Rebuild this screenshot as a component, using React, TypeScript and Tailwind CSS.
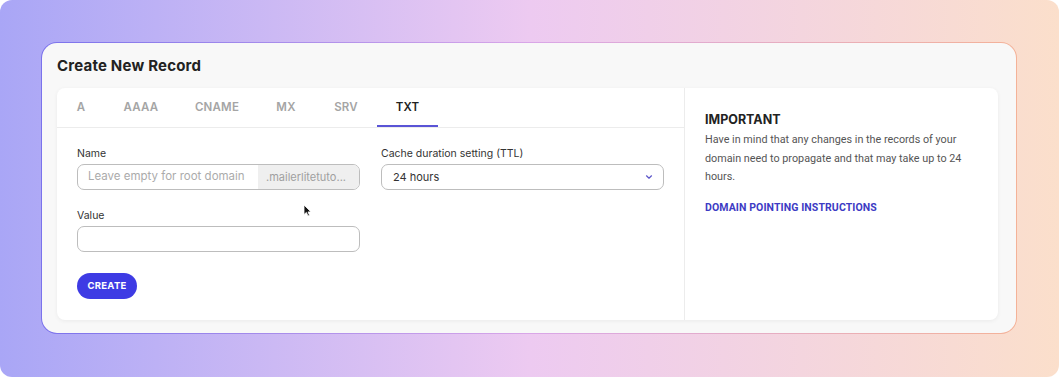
import React from "react";

const tabs = [
  { label: "A", w: "w-[48px]" },
  { label: "AAAA", w: "w-[72px]" },
  { label: "CNAME", w: "w-[80px]" },
  { label: "MX", w: "w-[58px]" },
  { label: "SRV", w: "w-[62px]" },
  { label: "TXT", w: "w-[61px]", active: true },
];

const poppins = { fontFamily: "Inter, 'Open Sans', sans-serif" };

export default function App() {
  return (
    <div className="w-[1059px] h-[377px] bg-white">
      <div className="relative w-full h-full rounded-[12px] bg-gradient-to-r from-[#a9a6f6] via-[#edcaf1] to-[#fbdfcb] pl-[41px] pt-[42px]">
        <div className="w-[976px] h-[292px] rounded-[16px] p-px bg-gradient-to-r from-[#7b72ec] via-[#d9a6e8] to-[#f4b298]">
          <div className="w-full h-full rounded-[15px] bg-[#f8f8f8] pl-[15px] pr-[18px] pt-[13px]">
            <h1
              className="text-[15px] leading-[20px] font-bold text-[#222] tracking-[0.2px]"
              style={{ fontFamily: "Inter, sans-serif" }}
            >
              Create New Record
            </h1>
            <div className="mt-[12px] flex h-[232px] rounded-[8px] bg-white shadow-[0_1px_4px_rgba(0,0,0,0.06)]">
              {/* Left pane */}
              <div className="w-[627px] flex flex-col">
                <div className="flex h-[40px] border-b border-[#ececec]">
                  {tabs.map((t) => (
                    <div
                      key={t.label}
                      className={`${t.w} h-full flex items-center justify-center text-[11.5px] font-semibold tracking-[0.2px] ${
                        t.active
                          ? "text-[#222] border-b-2 border-[#5a54d6]"
                          : "text-[#a5a5a5]"
                      }`}
                      style={poppins}
                    >
                      <span className={t.active ? "mt-[2px]" : ""}>{t.label}</span>
                    </div>
                  ))}
                </div>
                <div className="relative px-5 pt-[19px]">
                  <div className="grid grid-cols-2 gap-x-[21px]">
                    <div>
                      <div className="text-[10.5px] leading-[14px] text-[#333] mb-[3px]" style={poppins}>
                        Name
                      </div>
                      <div className="flex h-[26px] rounded-[7px] border border-[#bdbdbd] overflow-hidden">
                        <div className="flex-1 flex items-center pl-[10px] text-[11.5px] text-[#ababab]" style={poppins}>
                          Leave empty for root domain
                        </div>
                        <div className="w-[101px] bg-[#efefef] flex items-center pl-[8px] text-[11px] text-[#a0a0a0]" style={poppins}>
                          .mailerlitetuto...
                        </div>
                      </div>
                    </div>
                    <div>
                      <div className="text-[10.5px] leading-[14px] text-[#333] mb-[3px]" style={poppins}>
                        Cache duration setting (TTL)
                      </div>
                      <div className="flex items-center justify-between h-[26px] rounded-[7px] border border-[#bdbdbd] pl-[11px] pr-[9px]">
                        <span className="text-[11px] text-[#333]" style={poppins}>
                          24 hours
                        </span>
                        <svg width="10" height="10" viewBox="0 0 10 10" fill="none">
                          <path d="M2.5 3.8 L5 6.2 L7.5 3.8" stroke="#5b55c9" strokeWidth="1.2" strokeLinecap="round" strokeLinejoin="round" />
                        </svg>
                      </div>
                    </div>
                    <div className="mt-[19px]">
                      <div className="text-[10.5px] leading-[14px] text-[#333] mb-[3px]" style={poppins}>
                        Value
                      </div>
                      <div className="h-[26px] rounded-[7px] border border-[#bdbdbd]" />
                    </div>
                  </div>
                  <button
                    className="mt-[21px] h-[26px] w-[60px] rounded-full bg-[#3e3be4] text-white text-[9.5px] font-bold tracking-[0.3px]"
                    style={poppins}
                  >
                    CREATE
                  </button>
                  {/* cursor */}
                  <svg className="absolute left-[246px] top-[76px]" width="9" height="13" viewBox="0 0 9 13">
                    <path d="M1 1 L1 10.5 L3.4 8.4 L5 12 L6.5 11.3 L5 7.9 L8 7.9 Z" fill="#111" stroke="#fff" strokeWidth="0.8" />
                  </svg>
                </div>
              </div>
              {/* Right pane */}
              <div className="flex-1 border-l border-[#ececec] pl-5 pt-[24px]">
                <div className="text-[12.5px] leading-[16px] font-bold text-[#222]" style={{ fontFamily: "Inter, sans-serif" }}>
                  IMPORTANT
                </div>
                <p
                  className="mt-[3px] w-[272px] text-[10.8px] leading-[18.5px] text-[#555]"
                  style={{ fontFamily: "Roboto, sans-serif" }}
                >
                  Have in mind that any changes in the records of your domain need to propagate and that may take up to 24 hours.
                </p>
                <div
                  className="mt-[13px] text-[10.5px] font-bold text-[#3d3bc4] tracking-[0.1px]"
                  style={{ fontFamily: "Roboto, sans-serif" }}
                >
                  DOMAIN POINTING INSTRUCTIONS
                </div>
              </div>
            </div>
          </div>
        </div>
      </div>
    </div>
  );
}
